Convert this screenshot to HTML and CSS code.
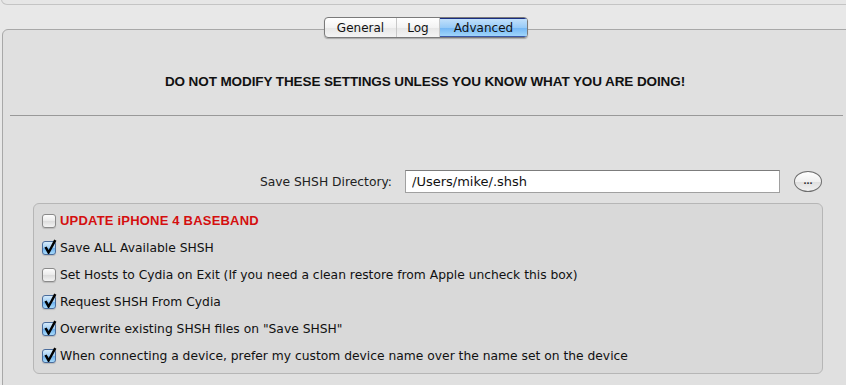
FILE: index.html
```html
<!DOCTYPE html>
<html lang="en">
<head>
  <meta charset="UTF-8">
  <title>Advanced Settings</title>
  <link rel="stylesheet" href="styles.css">
</head>
<body>
  <div class="prev-box"></div>

  <div class="tabs">
    <span class="tab">General</span>
    <span class="tab">Log</span>
    <span class="tab active">Advanced</span>
  </div>

  <div class="panel">
    <p class="warning">DO NOT MODIFY THESE SETTINGS UNLESS YOU KNOW WHAT YOU ARE DOING!</p>
    <hr class="divider">

    <div class="dir-row">
      <label class="dir-label" for="shshDir">Save SHSH Directory:</label>
      <input id="shshDir" class="dir-field" type="text" value="/Users/mike/.shsh">
      <button class="browse-btn" type="button">...</button>
    </div>

    <div class="group">
      <div class="opt"><span class="box"></span><span class="opt-text danger">UPDATE iPHONE 4 BASEBAND</span></div>
      <div class="opt"><span class="box checked"></span><span class="opt-text">Save ALL Available SHSH</span></div>
      <div class="opt"><span class="box"></span><span class="opt-text">Set Hosts to Cydia on Exit (If you need a clean restore from Apple uncheck this box)</span></div>
      <div class="opt"><span class="box checked"></span><span class="opt-text">Request SHSH From Cydia</span></div>
      <div class="opt"><span class="box checked"></span><span class="opt-text">Overwrite existing SHSH files on "Save SHSH"</span></div>
      <div class="opt"><span class="box checked"></span><span class="opt-text">When connecting a device, prefer my custom device name over the name set on the device</span></div>
    </div>
  </div>
</body>
</html>
```

FILE: styles.css
```css
* {
  box-sizing: border-box;
}

body {
  margin: 0;
  width: 846px;
  height: 385px;
  overflow: hidden;
  background: #e8e8e8;
  font-family: "DejaVu Sans", "Liberation Sans", sans-serif;
  font-size: 12.3px;
  color: #111;
}

/* bottom edge of the box above */
.prev-box {
  margin: -10px -10px 0 1px;
  height: 15px;
  border: 1px solid #c4c4c4;
  border-top: none;
  border-radius: 0 0 6px 6px;
  background: #e6e6e6;
}

/* segmented control */
.tabs {
  position: relative;
  z-index: 2;
  display: flex;
  width: 204px;
  height: 21px;
  margin: 12px 0 0 324px;
  border: 1px solid #7a7a7a;
  border-radius: 4px;
  background: linear-gradient(#ffffff, #f3f3f3 50%, #e6e6e6 51%, #f4f4f4);
  box-shadow: 0 1px 1px rgba(0, 0, 0, 0.25);
  overflow: hidden;
}

.tab {
  display: flex;
  align-items: center;
  justify-content: center;
  font-size: 12px;
  color: #111;
  border-right: 1px solid #c8c8c8;
}

.tab:nth-child(1) { width: 72px; }
.tab:nth-child(2) { width: 43px; }

.tab.active {
  flex: 1;
  border-right: none;
  background: linear-gradient(#c7e3fb, #98cbf7 50%, #72b5f4 51%, #a6dafb);
  box-shadow: inset 0 1px 0 #1a2d80, inset 0 -1px 0 #3a58a8;
}

.panel {
  margin: -9px -8px 0 2px;
  height: 370px;
  border: 1px solid #a8a8a8;
  border-radius: 6px;
  background: #e0e0e0;
  padding: 45px 0 0 0;
}

.warning {
  margin: 0;
  text-align: center;
  font-family: "Liberation Sans", Arial, sans-serif;
  font-size: 13.5px;
  font-weight: bold;
  letter-spacing: -0.1px;
  line-height: 14px;
  padding-right: 6px;
}

.divider {
  margin: 26px 10px 0 7px;
  border: none;
  border-top: 1px solid #999;
}

.dir-row {
  display: flex;
  align-items: center;
  margin-top: 54px;
  height: 23px;
}

.dir-label {
  width: 389px;
  text-align: right;
  color: #222;
}

.dir-field {
  width: 375px;
  height: 23px;
  margin-left: 13px;
  padding: 0 6px;
  border: 1px solid #a0a0a0;
  border-top-color: #7c7c7c;
  background: #fff;
  font-family: inherit;
  font-size: 13px;
  color: #111;
  outline: none;
}

.browse-btn {
  width: 28px;
  height: 21px;
  margin-left: 14px;
  padding: 0 0 4px 0;
  border: 1.5px solid #6e6e6e;
  border-radius: 50%;
  background: linear-gradient(#ffffff, #f0f0f0 50%, #dedede 51%, #f2f2f2);
  font-family: "Liberation Sans", Arial, sans-serif;
  font-size: 11px;
  font-weight: bold;
  color: #333;
}

.group {
  margin: 10px 0 0 30px;
  width: 790px;
  height: 171px;
  border: 1px solid #b6b6b6;
  border-radius: 6px;
  background: #d9d9d9;
  padding: 3px 0 0 8px;
}

.opt {
  display: flex;
  align-items: center;
  height: 27px;
}

.box {
  position: relative;
  width: 14px;
  height: 14px;
  flex: none;
  margin-right: 4px;
  border: 1px solid #8a8a8a;
  border-radius: 3px;
  background: linear-gradient(#fdfdfd, #eaeaea 50%, #dcdcdc 51%, #f3f3f3);
  box-shadow: 0 1px 1px rgba(0, 0, 0, 0.15);
}

.box.checked {
  border-color: #4a6c9c;
  background: linear-gradient(#d6ebfb, #9fcdf4 50%, #6cb0ee 51%, #a8dafa);
}

/* tick that pokes out past the top of the box */
.box.checked::after {
  content: "";
  position: absolute;
  left: 0;
  top: -3px;
  width: 14px;
  height: 16px;
  background: url("data:image/svg+xml,%3Csvg xmlns='http://www.w3.org/2000/svg' viewBox='0 0 14 16'%3E%3Cpath d='M1.4 8.6 L3.6 7.4 L5.7 11 L11.2 0.6 L13.4 1.8 L6.1 15 L5 15 Z' fill='%23000'/%3E%3C/svg%3E") no-repeat;
}

.opt-text {
  white-space: nowrap;
  color: #111;
}

.danger {
  font-family: "Liberation Sans", Arial, sans-serif;
  font-size: 13px;
  color: #d40f0f;
  font-weight: bold;
  letter-spacing: 0.2px;
}
```
